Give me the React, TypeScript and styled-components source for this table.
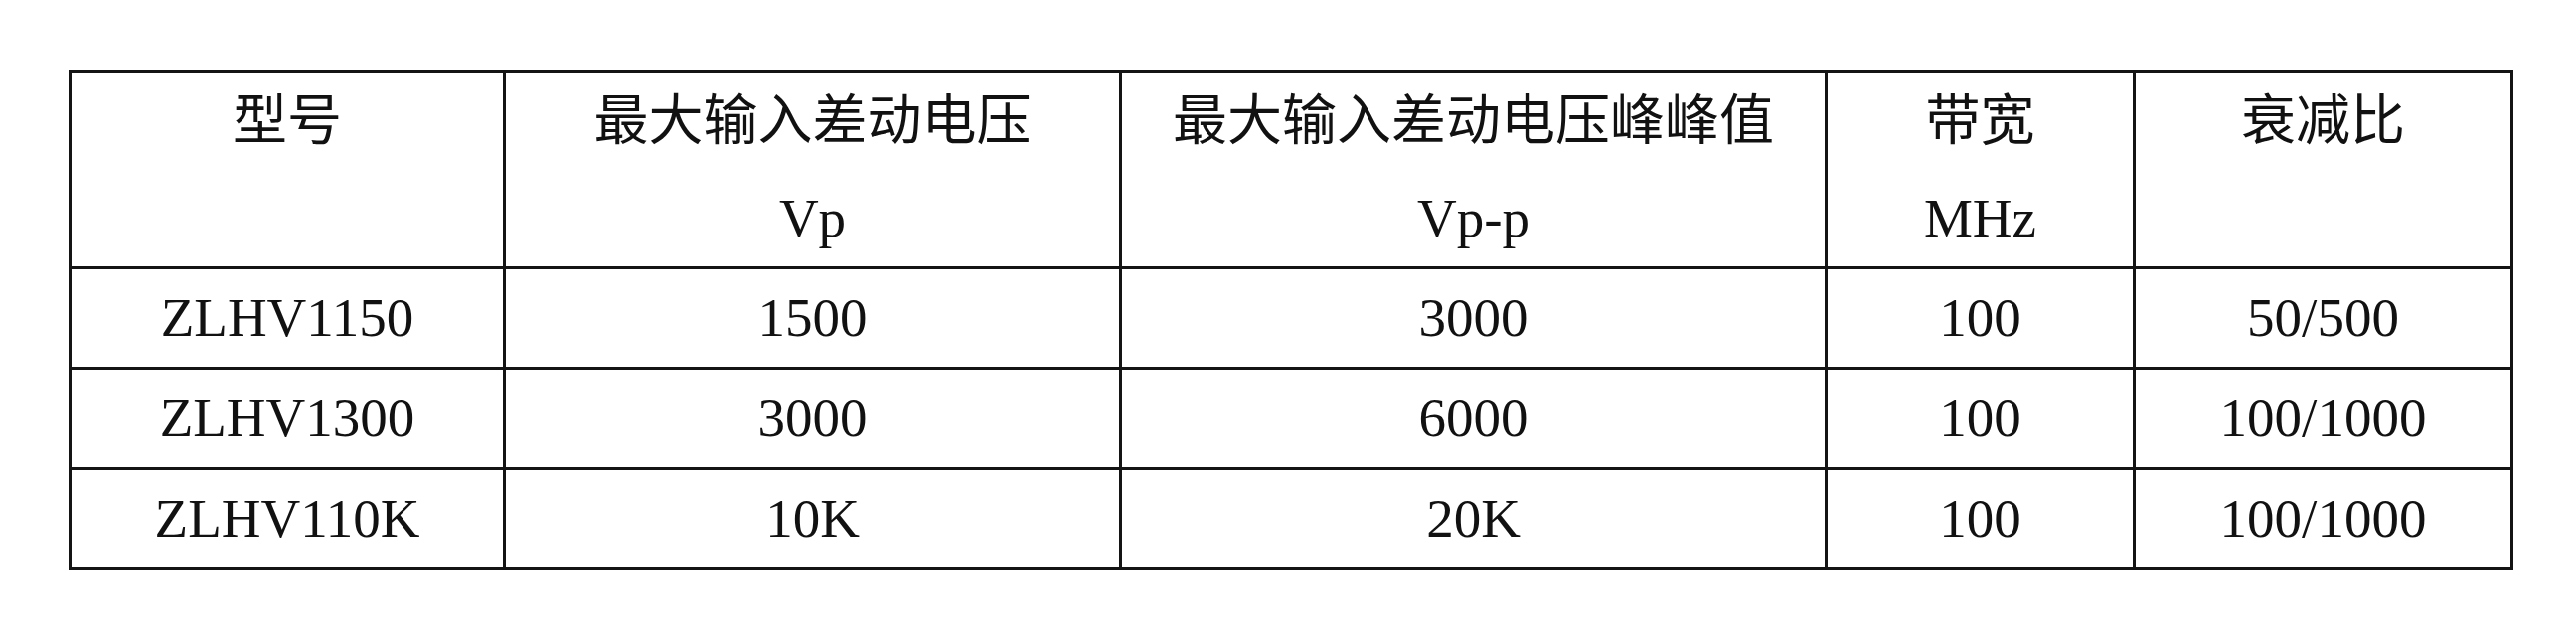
import React from "react";
import styled, { createGlobalStyle } from "styled-components";

type Column = {
  title: string;
  unit?: string;
  width: number;
};

const columns: Column[] = [
  { title: "型号", width: 437 },
  { title: "最大输入差动电压", unit: "Vp", width: 620 },
  { title: "最大输入差动电压峰峰值", unit: "Vp-p", width: 710 },
  { title: "带宽", unit: "MHz", width: 310 },
  { title: "衰减比", width: 380 },
];

const rows: string[][] = [
  ["ZLHV1150", "1500", "3000", "100", "50/500"],
  ["ZLHV1300", "3000", "6000", "100", "100/1000"],
  ["ZLHV110K", "10K", "20K", "100", "100/1000"],
];

export default function App() {
  return (
    <>
      <GlobalStyle />
      <Page>
        <Grid $widths={columns.map((c) => c.width)}>
          {columns.map((col) => (
            <HeadCell key={col.title}>
              <HeadLine>{col.title}</HeadLine>
              <HeadLine>{col.unit ?? ""}</HeadLine>
            </HeadCell>
          ))}
          {rows.map((row) =>
            row.map((value, i) => <Cell key={row[0] + i}>{value}</Cell>)
          )}
        </Grid>
      </Page>
    </>
  );
}

const GlobalStyle = createGlobalStyle`
  html, body {
    margin: 0;
    padding: 0;
    background: #ffffff;
  }
  body {
    font-family: "Liberation Serif", "Noto Sans CJK SC", serif;
    color: #111111;
  }
`;

const Page = styled.div`
  width: 2592px;
  height: 636px;
  padding: 70px 0 0 69px;
  box-sizing: border-box;
  background: #ffffff;
`;

const Grid = styled.div<{ $widths: number[] }>`
  display: grid;
  grid-template-columns: ${(p) => p.$widths.map((w) => `${w}px`).join(" ")};
  grid-template-rows: 198px repeat(3, 101px);
  width: max-content;
  border-top: 3px solid #141414;
  border-left: 3px solid #141414;
`;

const CellBase = styled.div`
  box-sizing: border-box;
  border-right: 3px solid #141414;
  border-bottom: 3px solid #141414;
  font-family: "Liberation Serif", "Noto Sans CJK SC", serif;
  font-size: 55px;
  color: #111111;
  text-align: center;
`;

const HeadCell = styled(CellBase)`
  display: flex;
  flex-direction: column;
`;

const HeadLine = styled.div`
  height: 98px;
  line-height: 98px;
  white-space: nowrap;
`;

const Cell = styled(CellBase)`
  display: flex;
  align-items: center;
  justify-content: center;
  padding-bottom: 2px;
`;
